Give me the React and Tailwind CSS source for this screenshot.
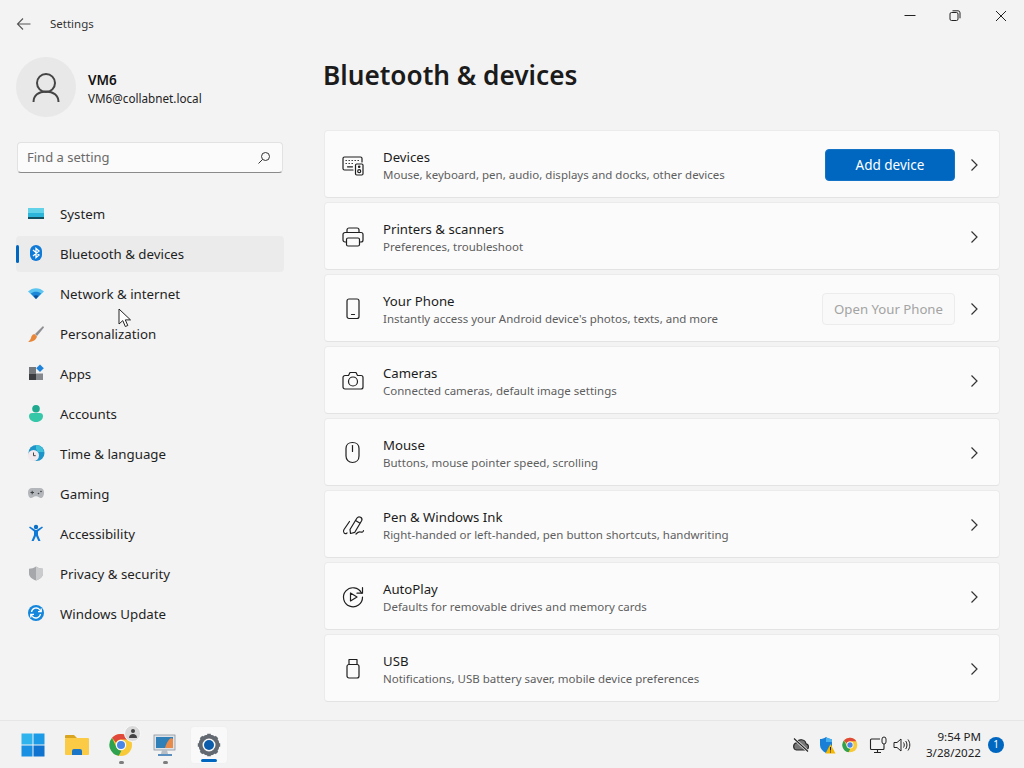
import React from "react";

const S = { fill: "none", stroke: "#1f1f1f", strokeWidth: 1.2, strokeLinecap: "round", strokeLinejoin: "round" };

function Chevron() {
  return (
    <svg width="12" height="14" viewBox="0 0 12 14" className="shrink-0">
      <path d="M3.5 1.5 9 7l-5.500 5.500" fill="none" stroke="#333" strokeWidth="1.200" />
    </svg>
  );
}

const cardIcons = {
  devices: (
    <g {...S}>
      <path d="M12 17H3.500A1.500 1.500 0 0 1 2 15.500v-10A1.500 1.500 0 0 1 3.500 4h16A1.500 1.500 0 0 1 21 5.500V9" />
      <rect x="14.500" y="11" width="7.500" height="11" rx="1.200" />
      <circle cx="18.200" cy="13.800" r=".7" fill="#1f1f1f" />
      <circle cx="18.200" cy="18.200" r="1.500" />
      <path d="M5 7.500h.4M8 7.500h.4M11 7.500h.4M14 7.500h.4M17 7.500h.4M5 10.500h.4M8 10.500h.4M11 10.500h.4M6.500 13.800h5" />
    </g>
  ),
  printer: (
    <g {...S}>
      <path d="M6 7.500V5A2 2 0 0 1 8 3h8a2 2 0 0 1 2 2v2.500" />
      <path d="M5.500 17H4a2 2 0 0 1-2-2V9.500a2 2 0 0 1 2-2h16a2 2 0 0 1 2 2V15a2 2 0 0 1-2 2h-1.500" />
      <rect x="5.500" y="13" width="13" height="8" rx="1.500" />
    </g>
  ),
  phone: (
    <g {...S}>
      <rect x="6" y="2" width="12" height="19.500" rx="2" />
      <path d="M10.500 17.500h3" />
    </g>
  ),
  camera: (
    <g {...S}>
      <path d="M4 6.500h3.500L9 3.500h6l1.500 3H20a2 2 0 0 1 2 2V18a2 2 0 0 1-2 2H4a2 2 0 0 1-2-2V8.500a2 2 0 0 1 2-2Z" />
      <circle cx="12" cy="12.500" r="4.500" />
    </g>
  ),
  mouse: (
    <g {...S}>
      <path d="M11.500 1.500c4 0 6.500 2.500 6.500 6v7.500c0 3.800-2.700 6.500-6.500 6.500S5 18.800 5 15V7.500c0-3.500 2.500-6 6.500-6Z" />
      <path d="M11.500 4.500v6" />
    </g>
  ),
  pen: (
    <g {...S}>
      <path d="M9 16.500 16 5a2.700 2.700 0 0 1 4.600 2.800L13.800 19.300 9.500 20.500Z" />
      <path d="M14.500 7.500l4.200 2.500" />
      <path d="M8.500 8.500 3 16.500c-1.700 2.700.8 5.300 3 3.500" />
      <path d="M15 21c1.500-1.500 3-2.500 4.500-2 1.500.5 2.800 0 3-1.500" />
    </g>
  ),
  autoplay: (
    <g {...S}>
      <path d="M20.500 8A9.500 9.500 0 1 0 21.500 12" />
      <path d="M21.500 2.500V8.200H16" />
      <path d="M9.500 8v8l6.500-4Z" />
    </g>
  ),
  usb: (
    <g {...S}>
      <rect x="6" y="7.500" width="12" height="13.500" rx="2" />
      <path d="M8 7.500V2.500h8v5" />
    </g>
  ),
};

const cards = [
  ["devices", "Devices", "Mouse, keyboard, pen, audio, displays and docks, other devices", "add"],
  ["printer", "Printers & scanners", "Preferences, troubleshoot"],
  ["phone", "Your Phone", "Instantly access your Android device's photos, texts, and more", "open"],
  ["camera", "Cameras", "Connected cameras, default image settings"],
  ["mouse", "Mouse", "Buttons, mouse pointer speed, scrolling"],
  ["pen", "Pen & Windows Ink", "Right-handed or left-handed, pen button shortcuts, handwriting"],
  ["autoplay", "AutoPlay", "Defaults for removable drives and memory cards"],
  ["usb", "USB", "Notifications, USB battery saver, mobile device preferences"],
];

const navIcons = {
  system: (
    <>
      <rect x="2" y="4" width="16" height="11" fill="#2cb5d9" />
      <rect x="2" y="4" width="16" height="5" fill="#62d2e8" />
      <rect x="2" y="13" width="16" height="2" fill="#12505f" />
    </>
  ),
  bluetooth: (
    <>
      <rect x="4" y="1" width="12" height="16" rx="6" fill="#0f7ad8" />
      <path d="M7 6l6 5-3 2.500V4.500L13 7l-6 5" fill="none" stroke="#fff" strokeWidth="1.300" />
    </>
  ),
  network: (
    <>
      <path d="M2 7.500c4.500-4.500 11.500-4.500 16 0l-8 7.500Z" fill="#5cc4f0" />
      <path d="M4.800 9.500c3-2.400 7.400-2.400 10.400 0L10 15Z" fill="#1a86d6" />
      <path d="M7.500 12c1.500-1 3.500-1 5 0L10 15Z" fill="#0a4f9c" />
    </>
  ),
  brush: (
    <>
      <path d="M17 2 9 10l2 2 7-8.500Z" fill="#8d8f93" />
      <path d="M8.500 10c-2.500.5-3 2-3.500 4-.3 1.500-1.500 2.800-3 3.800 4 .5 8-1.300 9-5.300Z" fill="#e8873a" />
    </>
  ),
  apps: (
    <>
      <rect x="3" y="3" width="7" height="6.500" fill="#74777c" />
      <rect x="3" y="9.500" width="7" height="6.500" fill="#3b3d41" />
      <rect x="10" y="9.500" width="7" height="6.500" fill="#85888d" />
      <path d="m14 .5 3.800 3.800-3.800 3.800-3.800-3.800Z" fill="#1d82dc" />
    </>
  ),
  accounts: (
    <>
      <circle cx="10" cy="4.800" r="3.800" fill="#1fa98f" />
      <path d="M3 12c0-2 1.500-3 3-3h8c1.500 0 3 1 3 3 0 3.500-3 6-7 6s-7-2.500-7-6Z" fill="#35c7a7" />
    </>
  ),
  time: (
    <>
      <circle cx="10.500" cy="9" r="8" fill="#1e95c9" />
      <path d="M10 1a8 8 0 0 1 8 7h-6l-2-3Z" fill="#3fc0d8" />
      <circle cx="7.500" cy="11.500" r="5.500" fill="#f1e9ee" />
      <path d="M7.500 8.500v3.200h2.200" fill="none" stroke="#444" strokeWidth="1" />
    </>
  ),
  gaming: (
    <>
      <path d="M6 4h8c2.500 0 4 1.500 4 4.500 0 3-1.200 5.500-3 5.500-1.500 0-2.500-1.800-5-1.800S6.500 14 5 14c-1.800 0-3-2.500-3-5.500C2 5.500 3.500 4 6 4Z" fill="#b3b6ba" />
      <path d="M4.500 8.500h3.500M6.200 6.800v3.500" stroke="#3d3f42" strokeWidth="1" />
      <circle cx="12.500" cy="9.500" r=".8" fill="#3d3f42" />
      <circle cx="15" cy="7.500" r=".8" fill="#3d3f42" />
    </>
  ),
  access: (
    <>
      <circle cx="10" cy="3" r="2.200" fill="#0d6fc4" />
      <path d="M3 3.500 8 7.500v3.500L5.500 17h2.200L10 12l2.300 5h2.200L12 11V7.500l5-4-1-1L10.500 6h-1L4 2.500Z" fill="#0f7ad8" />
    </>
  ),
  shield: (
    <>
      <path d="M10 2.500c2.300 1.700 4.500 2 7 2.200v5c0 3-3 5.300-7 6.800-4-1.500-7-3.800-7-6.800v-5c2.500-.2 4.700-.5 7-2.200Z" fill="#a5a7aa" />
      <path d="M10 2.500c2.300 1.700 4.500 2 7 2.200v5c0 3-3 5.300-7 6.800Z" fill="#c9cbcd" />
    </>
  ),
  update: (
    <>
      <circle cx="10" cy="9" r="8" fill="#1487dd" />
      <path d="M5.500 8a4.700 4.700 0 0 1 8.200-2.300L15 7.500M14.500 10a4.700 4.700 0 0 1-8.200 2.300L5 10.500" fill="none" stroke="#fff" strokeWidth="1.300" />
      <path d="M15.200 4.500v3.200h-3.200M4.800 13.500v-3.200H8" fill="none" stroke="#fff" strokeWidth="1.300" />
    </>
  ),
};

const nav = [
  ["system", "System"],
  ["bluetooth", "Bluetooth & devices", true],
  ["network", "Network & internet"],
  ["brush", "Personalization"],
  ["apps", "Apps"],
  ["accounts", "Accounts"],
  ["time", "Time & language"],
  ["gaming", "Gaming"],
  ["access", "Accessibility"],
  ["shield", "Privacy & security"],
  ["update", "Windows Update"],
];

function Card({ icon, title, sub, action }) {
  return (
    <div className="h-[68px] flex items-center rounded-[4px] bg-[#fbfbfb] border border-[#ebebeb] border-b-[#e3e3e3] pl-[16px] pr-[17px] pt-[2px]">
      <svg width="24" height="24" viewBox="0 0 24 24" className="shrink-0">{cardIcons[icon]}</svg>
      <div className="ml-[18px] flex-1 min-w-0 flex flex-col pt-[2px]">
        <div className="text-[13.2px] leading-[18px] text-[#1b1b1b]">{title}</div>
        <div className="text-[11.5px] leading-[18px] text-[#5e5e5e]">{sub}</div>
      </div>
      {action === "add" && (
        <div className="w-[130px] h-[32px] rounded-[4px] bg-[#0067c0] border border-[#1473c5] text-white text-[13.5px] flex items-center justify-center">Add device</div>
      )}
      {action === "open" && (
        <div className="w-[133px] h-[32px] rounded-[4px] bg-[#f9f9f9] border border-[#ececec] text-[#a3a3a3] text-[13.2px] pt-[2px] flex items-center justify-center">Open Your Phone</div>
      )}
      <div className="w-[27px] flex justify-end pr-[2px]"><Chevron /></div>
    </div>
  );
}

function Win11Logo() {
  return (
    <svg width="24" height="24" viewBox="0 0 24 24">
      <rect x="0.500" y="0.500" width="11" height="11" fill="#2fb4ee" />
      <rect x="12.500" y="0.500" width="11" height="11" fill="#1d9be6" />
      <rect x="0.500" y="12.500" width="11" height="11" fill="#1a90e2" />
      <rect x="12.500" y="12.500" width="11" height="11" fill="#0f73cf" />
    </svg>
  );
}

function Folder() {
  return (
    <svg width="26" height="24" viewBox="0 0 26 24">
      <path d="M1 3a1 1 0 0 1 1-1h8l3 3h-12Z" fill="#d9a520" />
      <rect x="1" y="5" width="24" height="17" rx="1" fill="#fbcb45" />
      <path d="M8 22v-4a2 2 0 0 1 2-2h6a2 2 0 0 1 2 2v4Z" fill="#1b76c8" />
    </svg>
  );
}

function ChromeIcon({ size = 24 }) {
  return (
    <svg width={size} height={size} viewBox="0 0 24 24">
      <circle cx="12" cy="12" r="11" fill="#f8ca3a" />
      <path d="M12 1a11 11 0 0 1 9.500 5.500H12a5.500 5.500 0 0 0-5 3.200L3 4.800A11 11 0 0 1 12 1Z" fill="#e0483b" />
      <path d="M3 4.800 7.500 14.500a5.500 5.500 0 0 0 5 3L9.800 22.800A11 11 0 0 1 3 4.800Z" fill="#2fa24f" />
      <circle cx="12" cy="12" r="5.200" fill="#fff" />
      <circle cx="12" cy="12" r="4" fill="#4a86e8" />
    </svg>
  );
}

function TaskIcon({ children, dot }) {
  return (
    <div className="w-[44px] h-[48px] flex items-center justify-center relative">
      {children}
      {dot && <div className="absolute bottom-[5px] left-[20px] w-[5px] h-[3px] rounded-full bg-[#7d7d7d]" />}
    </div>
  );
}

export default function App() {
  return (
    <div className="w-[1024px] h-[768px] overflow-hidden relative flex flex-col bg-[#f3f3f3] text-[#1b1b1b] font-['Noto_Sans',sans-serif]">
      <div className="h-[48px] shrink-0 flex items-center">
        <svg width="16" height="14" viewBox="0 0 16 14" className="ml-[16px] mb-[1px]">
          <path d="M14.500 7H1.500M7 1.500 1.500 7 7 12.500" fill="none" stroke="#555" strokeWidth="1.100" />
        </svg>
        <div className="ml-[18px] text-[11.500px] text-[#333]">Settings</div>
        <div className="ml-auto self-start pt-[10px] flex items-center">
          <div className="w-[46px] pl-[2px] flex justify-center">
            <svg width="12" height="12" viewBox="0 0 12 12"><path d="M.5 5.500h11" stroke="#222" strokeWidth="1" /></svg>
          </div>
          <div className="w-[46px] flex justify-center">
            <svg width="12" height="12" viewBox="0 0 12 12">
              <rect x="1" y="2.500" width="8" height="8" rx="1.500" fill="none" stroke="#222" strokeWidth="1" />
              <path d="M3.500 .8H9a2 2 0 0 1 2 2v5.500" fill="none" stroke="#222" strokeWidth="1" />
            </svg>
          </div>
          <div className="w-[46px] flex justify-center">
            <svg width="12" height="12" viewBox="0 0 12 12"><path d="M1 1l10 10M11 1 1 11" stroke="#222" strokeWidth="1" /></svg>
          </div>
        </div>
      </div>

      <div className="flex-1 min-h-0 flex">
        <aside className="w-[324px] shrink-0 pl-[16px] pr-[40px] pt-[9px]">
          <div className="flex items-center h-[60px]">
            <div className="w-[60px] h-[60px] rounded-full bg-[#e8e8e8] flex items-center justify-center">
              <svg width="32" height="32" viewBox="0 0 32 32">
                <circle cx="16" cy="12" r="9" fill="none" stroke="#444" strokeWidth="2" />
                <path d="M3.500 31c0-6.500 5-10.500 12.500-10.500S28.500 24.500 28.500 31" fill="none" stroke="#444" strokeWidth="2" />
              </svg>
            </div>
            <div className="ml-[12px] pt-[4px]">
              <div className="text-[13.5px] leading-[18px] font-semibold text-[#111]">VM6</div>
              <div className="text-[11.7px] leading-[18px] text-[#222]">VM6@collabnet.local</div>
            </div>
          </div>
          <div className="mt-[25px] ml-[1px] w-[266px] h-[31px] rounded-[4px] bg-[#fbfbfb] border border-[#e2e2e2] border-b-[#8a8a8a] flex items-center justify-between pl-[9px] pr-[11px]">
            <span className="text-[13px] text-[#6a6a6a]">Find a setting</span>
            <svg width="14" height="14" viewBox="0 0 14 14">
              <circle cx="8.500" cy="5.500" r="4" fill="none" stroke="#333" strokeWidth="1" />
              <path d="M5.500 8.500 1.500 12.500" stroke="#333" strokeWidth="1" />
            </svg>
          </div>
          <nav className="mt-[23px] flex flex-col gap-[4px]">
            {nav.map(([icon, label, active]) => (
              <div key={label} className={"h-[36px] flex items-center rounded-[4px] relative pl-[10px] " + (active ? "bg-[#ebebeb]" : "")}>
                {active && <div className="absolute left-0 top-[9px] w-[3px] h-[18px] rounded-full bg-[#0067c0]" />}
                <svg width="20" height="20" viewBox="0 0 20 20" className="shrink-0">{navIcons[icon]}</svg>
                <span className="ml-[14px] pt-[2px] text-[13.3px] text-[#1f1f1f]">{label}</span>
              </div>
            ))}
          </nav>
        </aside>

        <main className="flex-1 min-w-0 pr-[24px] pt-[9px]">
          <h1 className="ml-[-1px] h-[36px] leading-[36px] text-[26.2px] font-semibold text-[#1b1b1b]">Bluetooth &amp; devices</h1>
          <div className="mt-[37px] flex flex-col gap-[4px]">
            {cards.map(([icon, title, sub, action]) => (
              <Card key={title} icon={icon} title={title} sub={sub} action={action} />
            ))}
          </div>
        </main>
      </div>

      <footer className="h-[48px] shrink-0 border-t border-[#e6e6e6] bg-[#f2f2f2] flex items-center pl-[11px] pr-[20px]">
        <TaskIcon><Win11Logo /></TaskIcon>
        <TaskIcon><Folder /></TaskIcon>
        <TaskIcon dot>
          <ChromeIcon />
          <div className="absolute left-[25px] top-[4px] w-[17px] h-[17px] rounded-full bg-[#d9d9d9] border-[1.5px] border-[#fafafa] flex items-center justify-center">
            <svg width="10" height="10" viewBox="0 0 10 10">
              <circle cx="5" cy="3" r="2" fill="#444" />
              <path d="M1 10c0-3 2-4 4-4s4 1 4 4Z" fill="#444" />
            </svg>
          </div>
        </TaskIcon>
        <TaskIcon dot>
          <svg width="24" height="24" viewBox="0 0 24 24">
            <rect x="1" y="2" width="21" height="15" fill="#dfe3e8" stroke="#8a94a0" strokeWidth=".8" />
            <rect x="3" y="4" width="17" height="11" fill="#2f7fb8" />
            <path d="M12 15c1-4 3-8 6-10l2 1v9Z" fill="#e88b4a" />
            <path d="M9 17h5l1 4H8Z" fill="#b8bec6" />
            <rect x="5" y="21" width="14" height="2" fill="#5b8fc0" />
          </svg>
        </TaskIcon>
        <div className="w-[38px] h-[38px] mx-[3px] rounded-[4px] bg-[#f9f9f9] border border-[#f0f0f0] flex items-center justify-center relative">
          <svg width="24" height="24" viewBox="0 0 24 24">
            <circle cx="12" cy="12" r="8.500" fill="none" stroke="#636970" strokeWidth="4" />
            <path d="M12 .8v3.500M12 19.700v3.500M.8 12h3.500M19.700 12h3.500M4 4l2.500 2.500M17.500 17.500 20 20M4 20l2.500-2.500M17.500 6.500 20 4" stroke="#636970" strokeWidth="3.600" />
            <circle cx="12" cy="12" r="5" fill="#0b5cab" />
          </svg>
          <div className="absolute bottom-[1px] left-[10px] w-[16px] h-[3px] rounded-full bg-[#0067c0]" />
        </div>

        <div className="ml-auto flex items-center">
          <svg width="18" height="16" viewBox="0 0 18 16" className="mr-[8px]">
            <path d="M4.500 13h9a3.200 3.200 0 0 0 .5-6.300A5 5 0 0 0 4.500 5.800 3.700 3.700 0 0 0 4.500 13Z" fill="#777" stroke="#222" strokeWidth="1.100" />
            <path d="M2 1.500 16 14.500" stroke="#f2f2f2" strokeWidth="2.500" />
            <path d="M2 1.500 16 14.500" stroke="#222" strokeWidth="1.100" />
          </svg>
          <svg width="18" height="18" viewBox="0 0 18 18" className="mr-[6px]">
            <path d="M8 1c2 1.500 4 2 6 2v6c0 3.500-2.500 6-6 8-3.500-2-6-4.500-6-8V3c2 0 4-.5 6-2Z" fill="#1a7fd6" />
            <path d="M8 1c2 1.500 4 2 6 2v3H8Z" fill="#49b2ee" />
            <path d="m12.500 8 5 9.500h-10Z" fill="#f5b800" />
            <path d="M12.500 11v3.500M12.500 15.500v1" stroke="#222" strokeWidth="1" />
          </svg>
          <div className="mr-[11px]"><ChromeIcon size={16} /></div>
          <svg width="18" height="18" viewBox="0 0 18 18" className="mr-[6px]">
            <path d="M11 3H2.500A1 1 0 0 0 1.500 4v8.500a1 1 0 0 0 1 1H14a1 1 0 0 0 1-1V10" fill="none" stroke="#222" strokeWidth="1.100" />
            <path d="M8.500 13.500v3M5 16.500h7" stroke="#222" strokeWidth="1.100" />
            <rect x="13" y="1" width="4" height="7" rx="2" fill="none" stroke="#222" strokeWidth="1" />
            <path d="M15 8v2" stroke="#222" strokeWidth="1" />
          </svg>
          <svg width="18" height="16" viewBox="0 0 18 16" className="mr-[15px]">
            <path d="M1 5.500h3L8 2v12l-4-3.500H1Z" fill="none" stroke="#222" strokeWidth="1" />
            <path d="M10.500 5.500c1 1.500 1 3.500 0 5M12.700 4c1.700 2.500 1.700 5.500 0 8M15 2.500c2.400 3.500 2.400 7.500 0 11" fill="none" stroke="#222" strokeWidth="1" />
          </svg>
          <div className="flex flex-col items-end text-[11.6px] leading-[16px] text-[#222]">
            <span>9:54 PM</span>
            <span>3/28/2022</span>
          </div>
          <div className="ml-[7px] w-[16px] h-[16px] rounded-full bg-[#0067c0] text-white text-[10px] flex items-center justify-center">1</div>
        </div>
      </footer>

      <svg width="14" height="20" viewBox="0 0 14 20" className="absolute left-[118px] top-[308px]">
        <path d="M1 1v15l3.800-3.400L7.300 18.500l2.500-1-2.500-5.600h5.200Z" fill="#fff" stroke="#222" strokeWidth="1" />
      </svg>
    </div>
  );
}
